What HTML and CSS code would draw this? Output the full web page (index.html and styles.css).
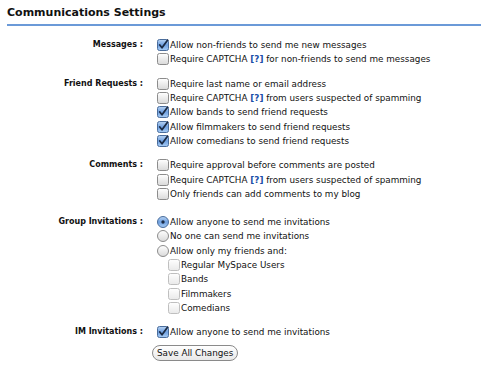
FILE: index.html
```html
<!DOCTYPE html>
<html lang="en">
<head>
    <meta charset="UTF-8">
    <title>Communications Settings</title>
    <link rel="stylesheet" href="styles.css">
</head>
<body>
    <svg class="defs" width="0" height="0">
        <defs>
            <linearGradient id="gOff" x1="0" y1="0" x2="0" y2="1">
                <stop offset="0" stop-color="#ffffff"/>
                <stop offset="1" stop-color="#d9d9d9"/>
            </linearGradient>
            <linearGradient id="gOn" x1="0" y1="0" x2="0" y2="1">
                <stop offset="0" stop-color="#b9d4f3"/>
                <stop offset="0.5" stop-color="#6fa0e0"/>
                <stop offset="1" stop-color="#a8cdf5"/>
            </linearGradient>
            <symbol id="cb-off" viewBox="0 0 12 12">
                <rect x="0.5" y="0.5" width="11" height="11" rx="2" fill="url(#gOff)" stroke="#8c8c8c"/>
            </symbol>
            <symbol id="cb-on" viewBox="0 0 12 12">
                <rect x="0.5" y="0.5" width="11" height="11" rx="2" fill="url(#gOn)" stroke="#4a6d9c"/>
                <path d="M2.8 6 L5 8.8 L10.5 1.2" fill="none" stroke="#1b2b45" stroke-width="1.8" stroke-linecap="round" stroke-linejoin="round"/>
            </symbol>
            <symbol id="rb-off" viewBox="0 0 12 12">
                <circle cx="6" cy="6" r="5.5" fill="url(#gOff)" stroke="#8c8c8c"/>
            </symbol>
            <symbol id="rb-on" viewBox="0 0 12 12">
                <circle cx="6" cy="6" r="5.5" fill="url(#gOn)" stroke="#4a6d9c"/>
                <circle cx="6" cy="6" r="1.7" fill="#1b2b45"/>
            </symbol>
        </defs>
    </svg>

    <div class="settings">
        <h1>Communications Settings</h1>

        <form class="settings-form">
            <!-- Messages -->
            <div class="group">
                <div class="group-label">Messages :</div>
                <div class="options">
                    <div class="opt"><svg class="box"><use href="#cb-on"/></svg><span>Allow non-friends to send me new messages</span></div>
                    <div class="opt"><svg class="box"><use href="#cb-off"/></svg><span>Require CAPTCHA <a class="help">[?]</a> for non-friends to send me messages</span></div>
                </div>
            </div>

            <!-- Friend Requests -->
            <div class="group">
                <div class="group-label">Friend Requests :</div>
                <div class="options">
                    <div class="opt"><svg class="box"><use href="#cb-off"/></svg><span>Require last name or email address</span></div>
                    <div class="opt"><svg class="box"><use href="#cb-off"/></svg><span>Require CAPTCHA <a class="help">[?]</a> from users suspected of spamming</span></div>
                    <div class="opt"><svg class="box"><use href="#cb-on"/></svg><span>Allow bands to send friend requests</span></div>
                    <div class="opt"><svg class="box"><use href="#cb-on"/></svg><span>Allow filmmakers to send friend requests</span></div>
                    <div class="opt"><svg class="box"><use href="#cb-on"/></svg><span>Allow comedians to send friend requests</span></div>
                </div>
            </div>

            <!-- Comments -->
            <div class="group comments">
                <div class="group-label">Comments :</div>
                <div class="options">
                    <div class="opt"><svg class="box"><use href="#cb-off"/></svg><span>Require approval before comments are posted</span></div>
                    <div class="opt"><svg class="box"><use href="#cb-off"/></svg><span>Require CAPTCHA <a class="help">[?]</a> from users suspected of spamming</span></div>
                    <div class="opt"><svg class="box"><use href="#cb-off"/></svg><span>Only friends can add comments to my blog</span></div>
                </div>
            </div>

            <!-- Group Invitations -->
            <div class="group">
                <div class="group-label">Group Invitations :</div>
                <div class="options">
                    <div class="opt"><svg class="box"><use href="#rb-on"/></svg><span>Allow anyone to send me invitations</span></div>
                    <div class="opt"><svg class="box"><use href="#rb-off"/></svg><span>No one can send me invitations</span></div>
                    <div class="opt"><svg class="box"><use href="#rb-off"/></svg><span>Allow only my friends and:</span></div>
                    <div class="opt sub"><svg class="box faded"><use href="#cb-off"/></svg><span>Regular MySpace Users</span></div>
                    <div class="opt sub"><svg class="box faded"><use href="#cb-off"/></svg><span>Bands</span></div>
                    <div class="opt sub"><svg class="box faded"><use href="#cb-off"/></svg><span>Filmmakers</span></div>
                    <div class="opt sub"><svg class="box faded"><use href="#cb-off"/></svg><span>Comedians</span></div>
                </div>
            </div>

            <!-- IM Invitations -->
            <div class="group last">
                <div class="group-label">IM Invitations :</div>
                <div class="options">
                    <div class="opt"><svg class="box"><use href="#cb-on"/></svg><span>Allow anyone to send me invitations</span></div>
                </div>
            </div>

            <div class="actions">
                <button type="button" class="save-button">Save All Changes</button>
            </div>
        </form>
    </div>
</body>
</html>
```

FILE: styles.css
```css
body {
    margin: 0;
    background-color: #fff;
    font-family: "DejaVu Sans", Verdana, sans-serif;
    font-size: 8.8px;
    color: #111;
}

.defs {
    position: absolute;
    width: 0;
    height: 0;
}

.settings {
    padding: 5px 19px 0 7px;
}

h1 {
    margin: 0;
    font-size: 11px;
    line-height: 16px;
    font-weight: bold;
    padding-bottom: 3px;
    border-bottom: 2px solid #6b9ad8;
}

.settings-form {
    padding-top: 12px;
}

.group {
    display: grid;
    grid-template-columns: 136px 1fr;
    margin-bottom: 10px;
}

.group.comments {
    margin-bottom: 14px;
}

.group.last {
    margin-bottom: 6px;
}

.group-label {
    text-align: right;
    font-weight: bold;
    font-size: 8px;
    line-height: 14.3px;
}

.options {
    padding-left: 14px;
}

.opt {
    display: flex;
    align-items: center;
    height: 14.3px;
    white-space: nowrap;
}

.opt.sub {
    padding-left: 11px;
}

.box {
    width: 12px;
    height: 12px;
    margin-right: 1px;
    flex: none;
}

.box.faded {
    opacity: 0.55;
}

.help {
    color: #1a4fa8;
    font-weight: bold;
}

.actions {
    padding-left: 145px;
}

.save-button {
    font-family: "DejaVu Sans", Verdana, sans-serif;
    font-size: 8.8px;
    color: #111;
    height: 16px;
    padding: 0 4px;
    border: 1px solid #8a8a8a;
    border-radius: 8px;
    background: linear-gradient(#ffffff, #e8e8e8);
}
```
